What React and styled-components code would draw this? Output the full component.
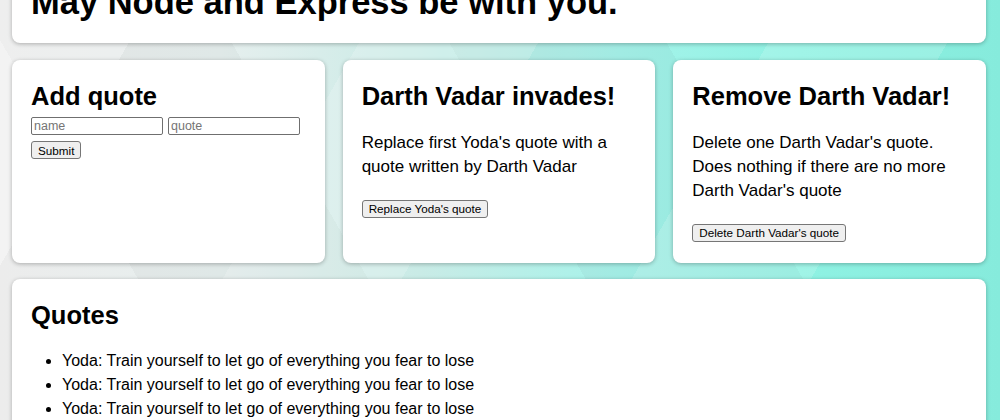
import React from 'react';
import styled, {createGlobalStyle} from 'styled-components';

const GlobalStyle = createGlobalStyle`
  html, body {
    margin: 0;
    padding: 0;
  }
  body {
    font-family: "Liberation Sans", Arial, sans-serif;
    color: #000;
    background: #e9ecec;
  }
`;

const Page = styled.div`
  min-height: 420px;
  overflow: hidden;
  background:
    linear-gradient(120deg, rgba(255,255,255,0.35) 0 12%, transparent 12% 30%, rgba(255,255,255,0.18) 30% 44%, transparent 44% 62%, rgba(255,255,255,0.15) 62% 76%, transparent 76%),
    linear-gradient(60deg, transparent 0 20%, rgba(0,0,0,0.03) 20% 38%, transparent 38% 55%, rgba(0,0,0,0.03) 55% 72%, transparent 72%),
    linear-gradient(90deg, #ececec 0%, #e6efee 22%, #c9ebe6 42%, #a6f3ea 62%, #8ff2e3 80%, #86ebdc 100%);
`;

const Main = styled.main`
  display: flex;
  flex-direction: column;
  gap: 17px;
  padding: 0 14px 20px 12px;
  margin-top: -60px;
`;

const Card = styled.section`
  background: #fff;
  border-radius: 8px;
  box-shadow: 0 1px 4px rgba(0, 0, 0, 0.28);
  padding: ${p => p.$pad || '21px 19px 18px'};
  min-height: ${p => p.$minH || 'auto'};
  box-sizing: border-box;
`;

const Row = styled.div`
  display: grid;
  grid-template-columns: repeat(3, 1fr);
  gap: 18px;
  margin-bottom: -1px;
`;

const Title = styled.h1`
  font-size: 34.5px;
  margin: 25px 0 0;
  line-height: 1.15;
`;

const Heading = styled.h2`
  font-size: 25.5px;
  margin: 0 0 ${p => p.$mb || '20px'};
  line-height: 1.2;
`;

const Text = styled.p`
  font-size: 17px;
  line-height: 24px;
  margin: 0 0 20px;
`;

const Form = styled.form`
  display: flex;
  flex-direction: column;
  align-items: flex-start;
  gap: 6px;
`;

const Inputs = styled.div`
  display: flex;
  gap: 5px;
`;

const Input = styled.input`
  width: 132px;
  height: 18px;
  box-sizing: border-box;
  border: 1px solid #6f6f6f;
  border-radius: 2px;
  padding: 1px 2px;
  font: 12.5px "Liberation Sans", Arial, sans-serif;
  &::placeholder { color: #757575; }
`;

const Button = styled.button`
  height: 18px;
  padding: 0 6px;
  font: 11.7px "Liberation Sans", Arial, sans-serif;
  color: #000;
  background: #efefef;
  border: 1px solid #767676;
  border-radius: 3px;
`;

const List = styled.ul`
  margin: 0;
  padding-left: 31px;
  font-size: 16px;
  line-height: 24px;
`;

const quotes = [
  'Yoda: Train yourself to let go of everything you fear to lose',
  'Yoda: Train yourself to let go of everything you fear to lose',
  'Yoda: Train yourself to let go of everything you fear to lose',
  'Yoda: Train yourself to let go of everything you fear to lose',
];

export default function App() {
  return (
    <Page>
      <GlobalStyle />
      <Main>
        <Card $pad="18px 19px 20px">
          <Title>May Node and Express be with you.</Title>
        </Card>
        <Row>
          <Card $minH="203px">
            <Heading $mb="6px">Add quote</Heading>
            <Form onSubmit={e => e.preventDefault()}>
              <Inputs>
                <Input type="text" placeholder="name" />
                <Input type="text" placeholder="quote" />
              </Inputs>
              <Button type="submit">Submit</Button>
            </Form>
          </Card>
          <Card>
            <Heading>Darth Vadar invades!</Heading>
            <Text>Replace first Yoda's quote with a quote written by Darth Vadar</Text>
            <Button>Replace Yoda's quote</Button>
          </Card>
          <Card>
            <Heading>Remove Darth Vadar!</Heading>
            <Text>Delete one Darth Vadar's quote. Does nothing if there are no more Darth Vadar's quote</Text>
            <Button>Delete Darth Vadar's quote</Button>
          </Card>
        </Row>
        <Card>
          <Heading $mb="19px">Quotes</Heading>
          <List>
            {quotes.map((q, i) => <li key={i}>{q}</li>)}
          </List>
        </Card>
      </Main>
    </Page>
  );
}
